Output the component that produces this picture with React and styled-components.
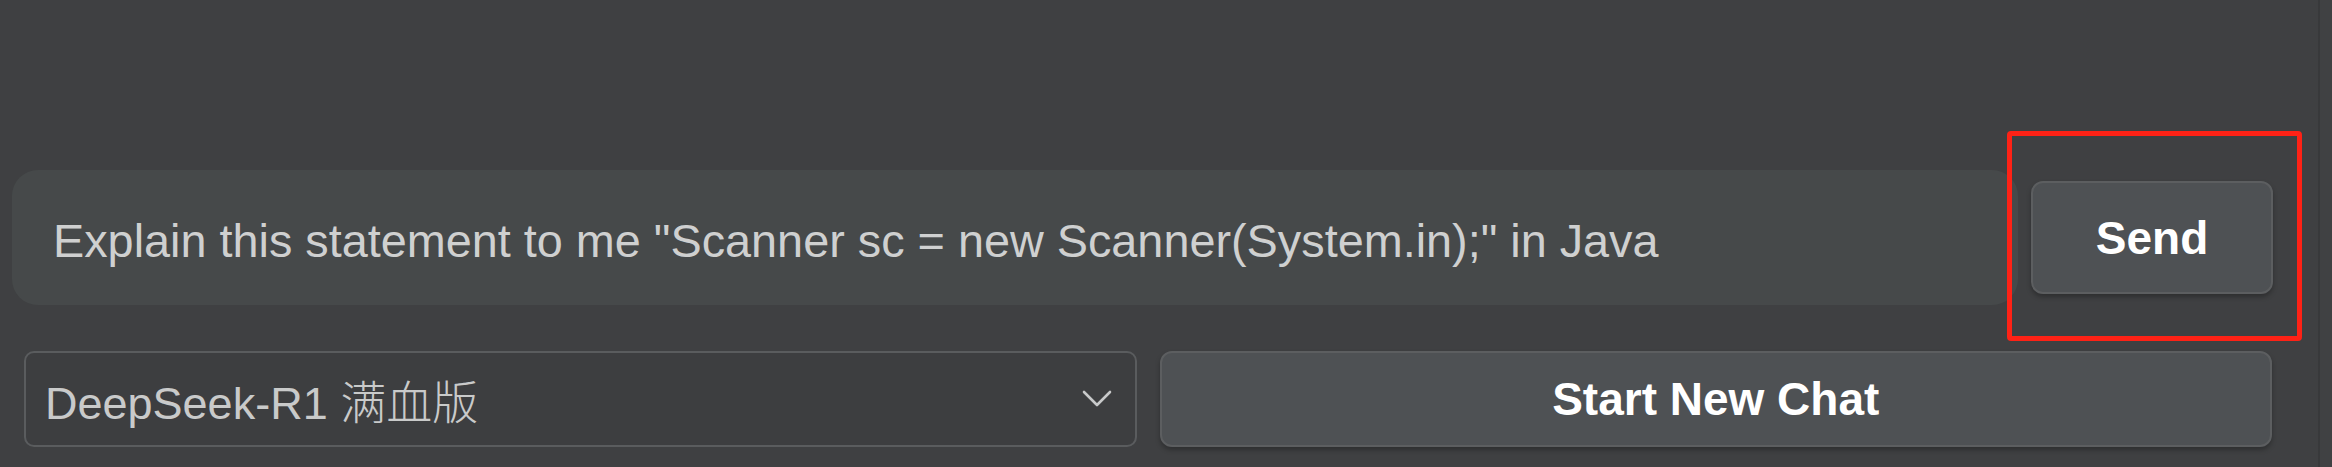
import React from "react";
import styled, { createGlobalStyle } from "styled-components";

const GlobalStyle = createGlobalStyle`
  html, body {
    margin: 0;
    padding: 0;
    background: #3f4042;
  }
  body {
    font-family: "Liberation Sans", Arial, "Noto Sans CJK SC", sans-serif;
  }
  * { box-sizing: border-box; }
`;

const Page = styled.div`
  display: flex;
  width: 2332px;
  height: 467px;
  background: #3f4042;
  overflow: hidden;
`;

const Main = styled.div`
  flex: 1;
  display: flex;
  flex-direction: column;
  justify-content: flex-end;
  gap: 46px;
  padding: 0 45px 20px 12px;
`;

const Gutter = styled.div`
  width: 14px;
  border-left: 2px solid #38393b;
  background: #404143;
`;

const InputRow = styled.div`
  display: flex;
  align-items: center;
  gap: 13px;
`;

const PromptBox = styled.div`
  flex: 1;
  height: 135px;
  display: flex;
  align-items: center;
  padding: 6px 0 0 41px;
  border-radius: 26px;
  background: #46494a;
  color: #cfd0d0;
  font-size: 46.8px;
  white-space: nowrap;
`;

const Annotated = styled.div`
  position: relative;
  display: flex;
`;

const Highlight = styled.div`
  position: absolute;
  inset: -50px -29px -47px -24px;
  border: 5px solid #fe2216;
  border-radius: 4px;
  pointer-events: none;
`;

const ActionButton = styled.button`
  width: ${(p) => p.$width || "100%"};
  height: ${(p) => p.$height};
  display: flex;
  align-items: center;
  justify-content: center;
  padding: 0;
  border: 2px solid #5c5e60;
  border-radius: 12px;
  background: #4e5154;
  color: #ffffff;
  font-family: "Liberation Sans", Arial, sans-serif;
  font-weight: 700;
  font-size: 46px;
  box-shadow: 0 3px 5px rgba(0, 0, 0, 0.28);
  cursor: pointer;
`;

const ControlRow = styled.div`
  display: grid;
  grid-template-columns: 1fr 1fr;
  gap: 23px;
  padding: 0 1px 0 12px;
`;

const ModelSelect = styled.div`
  height: 96px;
  display: flex;
  align-items: center;
  justify-content: space-between;
  padding: 0 23px 0 19px;
  border: 2px solid #5a5c5e;
  border-radius: 10px;
  background: #3d3e40;
  color: #c9caca;
  font-size: 45px;
`;

const ModelLabel = styled.span`
  white-space: nowrap;
  font-family: "Liberation Sans", Arial, "Noto Sans CJK SC", sans-serif;
`;

const Cjk = styled.span`
  font-family: "Noto Sans CJK SC", sans-serif;
  font-weight: 300;
  font-size: 46px;
`;

const Chevron = () => (
  <svg width="30" height="18" viewBox="0 0 30 18" fill="none">
    <path d="M2 2 L15 15 L28 2" stroke="#c8c9ca" strokeWidth="2.6" strokeLinecap="round" strokeLinejoin="round" />
  </svg>
);

export default function App() {
  return (
    <>
      <GlobalStyle />
      <Page>
        <Main>
          <InputRow>
            <PromptBox>
              Explain this statement to me "Scanner sc = new Scanner(System.in);" in Java
            </PromptBox>
            <Annotated>
              <ActionButton $width="242px" $height="113px">Send</ActionButton>
              <Highlight />
            </Annotated>
          </InputRow>
          <ControlRow>
            <ModelSelect>
              <ModelLabel>
                DeepSeek-R1 <Cjk>满血版</Cjk>
              </ModelLabel>
              <Chevron />
            </ModelSelect>
            <ActionButton $height="96px">Start New Chat</ActionButton>
          </ControlRow>
        </Main>
        <Gutter />
      </Page>
    </>
  );
}
